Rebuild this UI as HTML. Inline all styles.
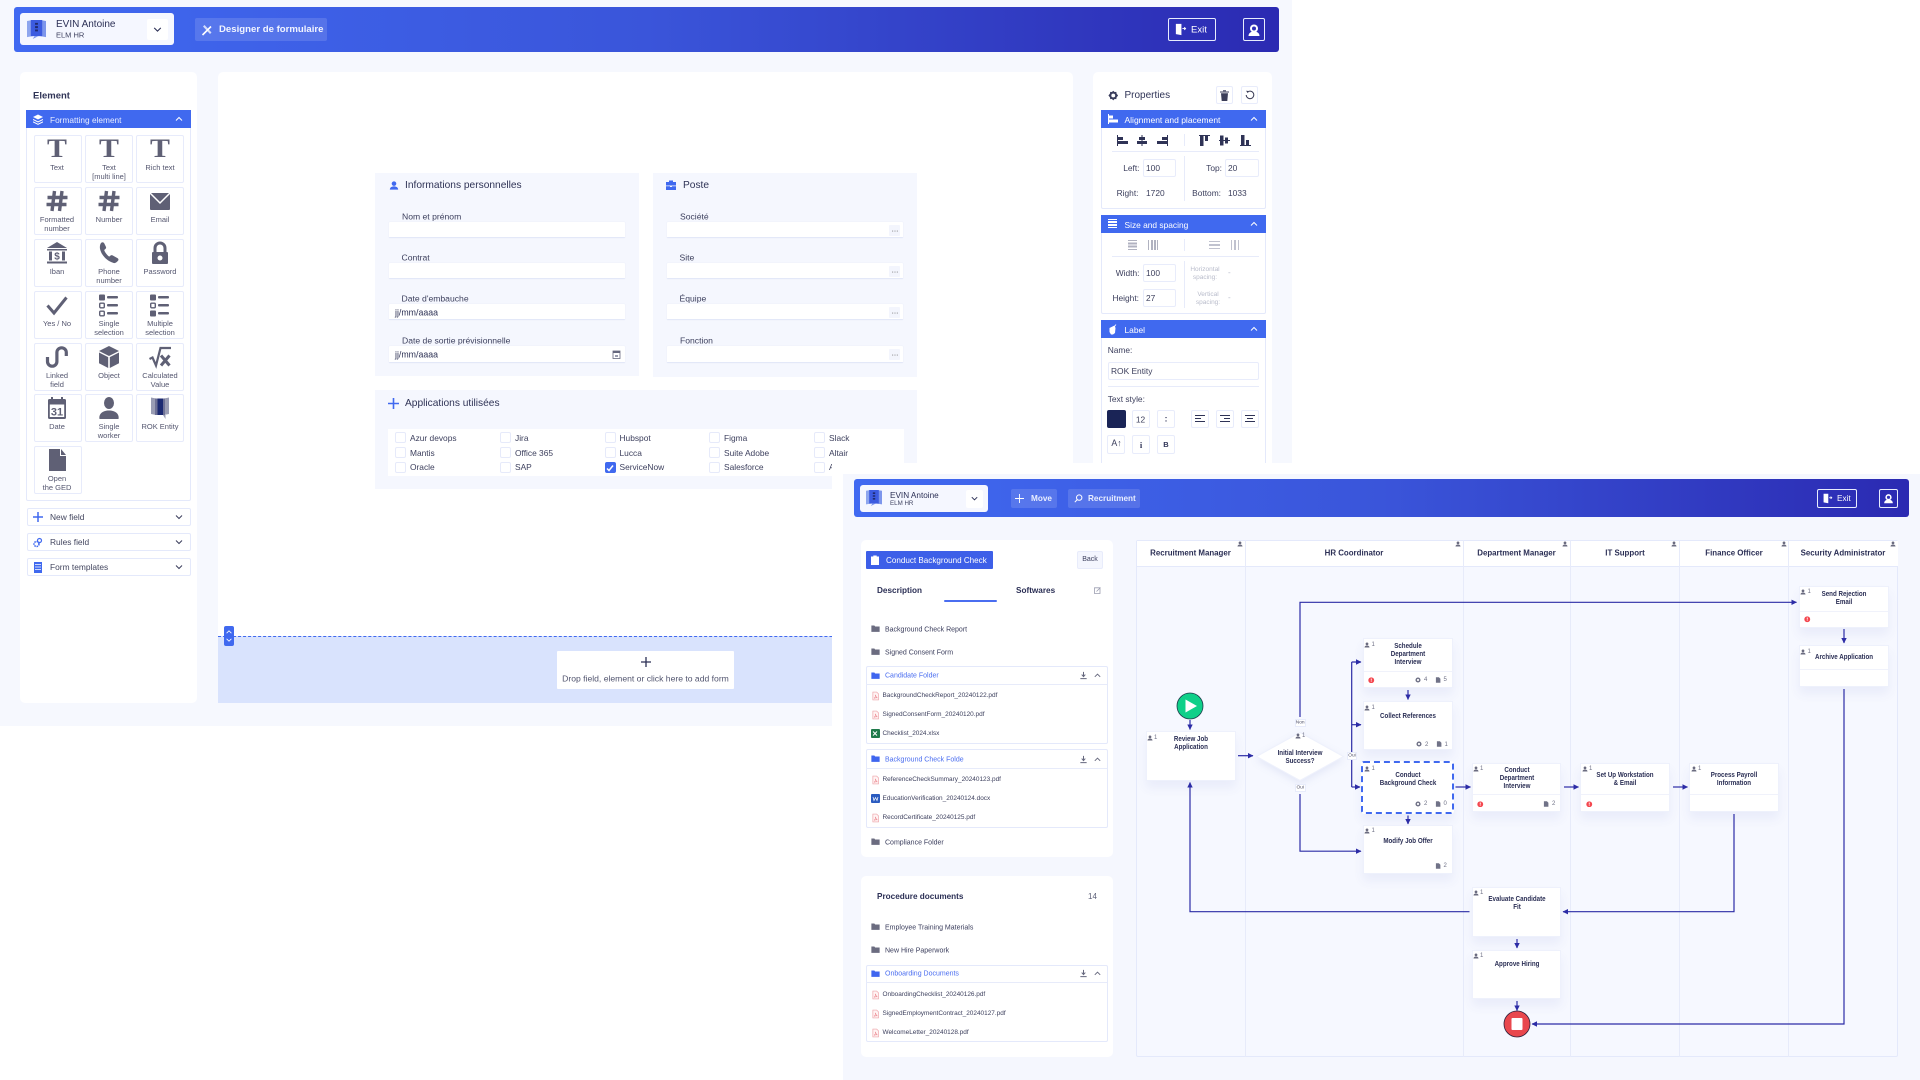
<!DOCTYPE html>
<html lang="en"><head><meta charset="utf-8"><title>Form designer and process map</title>
<style>
*{box-sizing:border-box}
html,body{margin:0;padding:0;width:1920px;height:1080px;overflow:hidden;background:#fff}
body{position:relative;font-family:"Liberation Sans",sans-serif;color:#2b2f55}
div,span,svg{position:absolute}
.t{white-space:nowrap;line-height:1;transform:translateY(-50%)}
.c{white-space:nowrap;line-height:1.1;text-align:center;transform:translate(-50%,-50%)}
.r{white-space:nowrap;line-height:1;text-align:right;transform:translate(-100%,-50%)}
.hd{background:linear-gradient(90deg,#4069f1 0%,#3a55da 50%,#2b2ab2 100%);border-radius:3px}
.user{background:#f5f7ff;border-radius:3px}
.chev{background:#fff;border-radius:2px}
.pill{background:rgba(255,255,255,.13);border-radius:2px}
.wb{border:1px solid #e8edfd;border-radius:2px;color:#fff}
.panel{background:#fff;border-radius:5px}
.ah{background:#4069ef;color:#fff}
.box{border:1px solid #e4e9fb;border-radius:2px;background:#fff}
.cell{background:#fff;border:1px solid #e7ebfb;border-radius:2px;width:48px;height:48px}
.lb{font-size:7.5px;color:#54566f;margin-top:.5px}
.sec{background:#f5f7fe}
.inp{background:#fff;border-bottom:1px solid #e3e8f8;border-radius:1px;box-shadow:0 0 0 .5px #eef1fb}
.ck{width:11px;height:11px;background:#fff;border:1px solid #e6eafa;border-radius:2px}
.n{background:#fff;border:1px solid #eef1fc;box-shadow:0 7px 10px rgba(70,90,180,.07);width:90px}
.nt{font-size:7.4px;font-weight:bold;color:#2b2f55;text-align:center;line-height:8px;white-space:nowrap;transform:translateX(-50%) scaleX(.84)}
.g{fill:#5f6075}
.b{fill:#4069ef}
.sq{background:#fff;border:1px solid #e8ecfb;border-radius:2px}
.dim{color:#b9bccb}
.f{font-size:6.45px;color:#3c3f5d}
.fold{font-size:7px;color:#3a3d5c}
.fb{font-size:7px;color:#4a6df0}
.hr{background:#e7ebfa}
.st{font-size:7px;color:#6f7186}
.T{font:bold 26px "Liberation Serif",serif;color:#5f6075;transform:translate(-50%,-50%) scaleX(1.15)}
.fl{font-size:8.6px;color:#3c3f5d}
.dots{background:#f3f5fd;width:11px;height:11px;border-radius:1px}
</style></head>
<body>
<svg width="0" height="0" style="left:0;top:0">
<defs>
<symbol id="person" viewBox="0 0 24 24"><circle cx="12" cy="7.5" r="5.5"/><path d="M2 22c0-5.5 4.500-8 10-8s10 2.500 10 8z"/></symbol>
<symbol id="folder" viewBox="0 0 24 24"><path d="M1 4h8l2 2.500h12V21H1z"/></symbol>
<symbol id="pdf" viewBox="0 0 24 24"><path d="M5 1.500h10l5 5v16H5z" fill="#fff3f3" stroke="#eea2a8" stroke-width="1.800"/><path d="M8 18c3-2 5-6 4-9 1 4 3 7 5 8-3-.500-6 0-9 1z" fill="none" stroke="#e56a74" stroke-width="1.300"/></symbol>
<symbol id="up" viewBox="0 0 10 10"><path d="M2 6.500 5 3.500 8 6.500" fill="none" stroke="currentColor" stroke-width="1"/></symbol>
<symbol id="down" viewBox="0 0 10 10"><path d="M2 3.500 5 6.500 8 3.500" fill="none" stroke="currentColor" stroke-width="1"/></symbol>
<symbol id="dl" viewBox="0 0 10 10"><path d="M5 1v5M3 4l2 2.200L7 4M1.500 8.500h7" fill="none" stroke="#66687e" stroke-width="1.100"/></symbol>
<symbol id="logo" viewBox="0 0 20 22"><path d="M0 2 6 1v17l-6 1z" fill="#8ea6ee"/><path d="M14 1l6 1v17l-6-1z" fill="#7d96ec"/><path d="M4 1h12v17H4z" fill="#3c5be0"/><path d="M6 21l2-3h4z" fill="#7d96ec"/><path d="M10 4v10" stroke="#1f2a6e" stroke-width="3" stroke-dasharray="2 1.500"/></symbol>
<symbol id="door" viewBox="0 0 14 14"><path d="M2 1h6v12l-6-1z" fill="#fff"/><path d="M9 6h3M11 4.500 12.500 6 11 7.500" stroke="#fff" stroke-width="1" fill="none"/></symbol>
<symbol id="avatar" viewBox="0 0 14 14"><circle cx="7" cy="5.500" r="4" fill="#fff"/><circle cx="7" cy="5.500" r="2" fill="#3030b8"/><path d="M1.500 13c0-3 2.500-4.500 5.500-4.500S12.500 10 12.500 13z" fill="#fff"/></symbol>
<symbol id="alert" viewBox="0 0 10 10"><circle cx="5" cy="5" r="4.500" fill="#f4474f"/><path d="M5 2.300v3.200M5 6.700v1" stroke="#fff" stroke-width="1.300"/></symbol>
<symbol id="soft" viewBox="0 0 10 10"><circle cx="5" cy="5" r="4.200" fill="#707287"/><circle cx="5" cy="5" r="1.800" fill="#fff"/></symbol>
<symbol id="doc" viewBox="0 0 10 10"><path d="M1.500 .5h5l2.500 2.500v6.500h-7.500z" fill="#707287"/></symbol>
<marker id="ah" markerWidth="6" markerHeight="6" refX="5" refY="3" orient="auto" markerUnits="userSpaceOnUse"><path d="M0 .3 5.500 3 0 5.700z" fill="#2c2ca6"/></marker>
</defs>
</svg>

<!-- WINDOW 1 -->
<div style="left:0;top:0;width:1292px;height:726px;background:#f6f8fe"></div>
<div class="hd" style="left:13.500px;top:7px;width:1265.500px;height:45px"></div>
<div class="user" style="left:20px;top:13px;width:154px;height:32px"></div>
<svg style="left:27px;top:19px" width="19" height="21"><use href="#logo"/></svg>
<span class="t" style="left:56px;top:25px;font-size:10px;color:#2b2f55">EVIN Antoine</span>
<span class="t" style="left:56px;top:35px;font-size:7.500px;color:#3f4260">ELM HR</span>
<div class="chev" style="left:147px;top:19px;width:21px;height:21px"></div>
<svg style="left:152px;top:24px;color:#2b2f55" width="11" height="11"><use href="#down"/></svg>
<div class="pill" style="left:195px;top:18px;width:132px;height:23px"></div>
<svg style="left:201px;top:23.500px" width="12" height="12" viewBox="0 0 12 12"><path d="M1.500 11 10 2.500" stroke="#fff" stroke-width="1.600"/><path d="M2 2.500 3.500 1l7 7.500L9 10z" fill="#fff" opacity=".75"/></svg>
<span class="t" style="left:219px;top:29.500px;font-size:9.600px;font-weight:bold;color:#f2f5ff">Designer de formulaire</span>
<div class="wb" style="left:1168px;top:18px;width:48px;height:23px"></div>
<svg style="left:1174px;top:23px" width="13" height="13"><use href="#door"/></svg>
<span class="t" style="left:1191px;top:29.500px;font-size:9.500px;color:#fff">Exit</span>
<div class="wb" style="left:1243px;top:18px;width:22px;height:23px"></div>
<svg style="left:1247px;top:22.500px" width="14" height="14"><use href="#avatar"/></svg>

<!-- left panel -->
<div class="panel" style="left:20px;top:72px;width:177px;height:631px"></div>
<span class="t" style="left:33px;top:95.500px;font-size:9.500px;font-weight:bold;color:#2f3356">Element</span>
<div class="box" style="left:26px;top:110px;width:165px;height:391px"></div>
<div class="ah" style="left:26px;top:110px;width:165px;height:18px"></div>
<svg style="left:33px;top:113.500px" width="10" height="11" viewBox="0 0 10 11"><path d="M5 .5 10 3 5 5.500 0 3z" fill="#fff"/><path d="M0 5.500 5 8l5-2.500M0 7.800l5 2.500 5-2.500" fill="none" stroke="#fff"/></svg>
<span class="t" style="left:50px;top:119.500px;font-size:8.300px;color:#e8edff">Formatting element</span>
<svg style="left:174px;top:114px;color:#fff" width="10" height="10"><use href="#up"/></svg>

<div class="cell" style="left:33.500px;top:135px"></div><div class="cell" style="left:85px;top:135px"></div><div class="cell" style="left:136px;top:135px"></div>
<div class="cell" style="left:33.500px;top:187px"></div><div class="cell" style="left:85px;top:187px"></div><div class="cell" style="left:136px;top:187px"></div>
<div class="cell" style="left:33.500px;top:239px"></div><div class="cell" style="left:85px;top:239px"></div><div class="cell" style="left:136px;top:239px"></div>
<div class="cell" style="left:33.500px;top:291px"></div><div class="cell" style="left:85px;top:291px"></div><div class="cell" style="left:136px;top:291px"></div>
<div class="cell" style="left:33.500px;top:343px"></div><div class="cell" style="left:85px;top:343px"></div><div class="cell" style="left:136px;top:343px"></div>
<div class="cell" style="left:33.500px;top:394px"></div><div class="cell" style="left:85px;top:394px"></div><div class="cell" style="left:136px;top:394px"></div>
<div class="cell" style="left:33.500px;top:446px"></div>

<span class="T" style="left:57px;top:149px">T</span>
<span class="T" style="left:109px;top:149px">T</span>
<span class="T" style="left:160px;top:149px">T</span>
<span class="c lb" style="left:57px;top:167px">Text</span>
<span class="c lb" style="left:109px;top:171.500px;line-height:9px">Text<br>[multi line]</span>
<span class="c lb" style="left:160px;top:167px">Rich text</span>

<svg style="left:45px;top:189px" width="24" height="24" viewBox="0 0 24 24"><path d="M9.500 2 7 22M17 2l-2.500 20M2.500 8.500h20M1.500 15.500h20" stroke="#5f6075" stroke-width="3.400" fill="none"/></svg>
<svg style="left:97px;top:189px" width="24" height="24" viewBox="0 0 24 24"><path d="M9.500 2 7 22M17 2l-2.500 20M2.500 8.500h20M1.500 15.500h20" stroke="#5f6075" stroke-width="3.400" fill="none"/></svg>
<svg style="left:148px;top:189px" width="24" height="24" viewBox="0 0 24 24"><rect x="2" y="4" width="20" height="17" rx="1" class="g"/><path d="M2 4l10 10L22 4" fill="none" stroke="#fff" stroke-width="1.500"/></svg>
<span class="c lb" style="left:57px;top:223.500px;line-height:9px">Formatted<br>number</span>
<span class="c lb" style="left:109px;top:219px">Number</span>
<span class="c lb" style="left:160px;top:219px">Email</span>

<svg style="left:45px;top:241px" width="24" height="24" viewBox="0 0 24 24"><path d="M12 1 22 7H2z" class="g"/><rect x="2" y="8" width="20" height="1.500" class="g"/><rect x="4" y="10.500" width="3" height="9" class="g"/><rect x="17" y="10.500" width="3" height="9" class="g"/><rect x="2" y="20.500" width="20" height="2" class="g"/><text x="12" y="18.500" font-size="10" font-weight="bold" text-anchor="middle" fill="#5f6075" font-family="Liberation Sans">$</text></svg>
<svg style="left:97px;top:241px" width="24" height="24" viewBox="0 0 24 24"><path d="M4.600 1.500c1-.6 2-.3 2.600.7l1.700 3.500c.4.800.3 1.600-.4 2.200L7.200 9c.6 2.200 3 5.400 5 6.600l1.400-1.100c.7-.5 1.500-.5 2.200 0l4.900 2.700c.9.700 1 1.800.3 2.600-1.400 1.700-3 2.800-5 2C10 19.800 4.600 14.500 3.100 8.200 2.500 5.800 3 2.600 4.600 1.500z" class="g"/></svg>
<svg style="left:148px;top:241px" width="24" height="24" viewBox="0 0 24 24"><path d="M7 12V7a5 5 0 0 1 10 0v5" fill="none" stroke="#5f6075" stroke-width="3"/><rect x="4" y="11" width="16" height="12" rx="1" class="g"/><circle cx="12" cy="17" r="2.500" fill="#fff"/></svg>
<span class="c lb" style="left:57px;top:271px">Iban</span>
<span class="c lb" style="left:109px;top:275.500px;line-height:9px">Phone<br>number</span>
<span class="c lb" style="left:160px;top:271px">Password</span>

<svg style="left:45px;top:293px" width="24" height="24" viewBox="0 0 24 24"><path d="M2.500 12.500 9 20 21.500 4.500" fill="none" stroke="#5f6075" stroke-width="3"/></svg>
<svg style="left:97px;top:293px" width="24" height="24" viewBox="0 0 24 24"><rect x="2" y="1.500" width="6" height="6" rx="1" class="g"/><rect x="10" y="3" width="11" height="2.500" rx="1" class="g"/><rect x="2.700" y="10.200" width="4.600" height="4.600" rx="1" fill="none" stroke="#5f6075" stroke-width="1.400"/><rect x="10" y="11" width="11" height="2.500" rx="1" class="g"/><rect x="2.700" y="18.200" width="4.600" height="4.600" rx="1" fill="none" stroke="#5f6075" stroke-width="1.400"/><rect x="10" y="19" width="11" height="2.500" rx="1" class="g"/></svg>
<svg style="left:148px;top:293px" width="24" height="24" viewBox="0 0 24 24"><rect x="2" y="1.500" width="6" height="6" rx="1" class="g"/><rect x="10" y="3" width="11" height="2.500" rx="1" class="g"/><rect x="2.700" y="10.200" width="4.600" height="4.600" rx="1" fill="none" stroke="#5f6075" stroke-width="1.400"/><rect x="10" y="11" width="11" height="2.500" rx="1" class="g"/><rect x="2" y="17.500" width="6" height="6" rx="1" class="g"/><rect x="10" y="19" width="11" height="2.500" rx="1" class="g"/></svg>
<span class="c lb" style="left:57px;top:323px">Yes / No</span>
<span class="c lb" style="left:109px;top:327.500px;line-height:9px">Single<br>selection</span>
<span class="c lb" style="left:160px;top:327.500px;line-height:9px">Multiple<br>selection</span>

<svg style="left:45px;top:345px" width="24" height="24" viewBox="0 0 24 24"><path d="M2.500 12v4.500a4.700 4.700 0 0 0 9.400 0V7.500a4.700 4.700 0 0 1 9.400 0V11" fill="none" stroke="#5f6075" stroke-width="3.200"/></svg>
<svg style="left:97px;top:345px" width="24" height="24" viewBox="0 0 24 24"><path d="M12 1 22 6 12 11 2 6z" class="g"/><path d="M2 7.500l9.200 4.600V23L2 18.300zM22 7.500l-9.200 4.600V23L22 18.300z" class="g"/></svg>
<svg style="left:148px;top:345px" width="24" height="24" viewBox="0 0 24 24"><path d="M1.500 14l3-1.500 3.500 8L12.500 3H23" fill="none" stroke="#5f6075" stroke-width="2.200"/><path d="M13 10.500l8.500 10M21.500 10.500l-8.500 10" stroke="#5f6075" stroke-width="3"/></svg>
<span class="c lb" style="left:57px;top:379.500px;line-height:9px">Linked<br>field</span>
<span class="c lb" style="left:109px;top:375px">Object</span>
<span class="c lb" style="left:160px;top:379.500px;line-height:9px">Calculated<br>Value</span>

<svg style="left:45px;top:396px" width="24" height="24" viewBox="0 0 24 24"><rect x="3" y="3" width="18" height="20" rx="1.500" class="g"/><rect x="4.800" y="8.500" width="14.400" height="12.500" fill="#fff"/><rect x="6" y="1" width="2" height="3" class="g"/><rect x="16" y="1" width="2" height="3" class="g"/><text x="12" y="19.500" font-size="11" font-weight="bold" text-anchor="middle" fill="#5f6075" font-family="Liberation Sans">31</text></svg>
<svg style="left:97px;top:396px" width="24" height="24" viewBox="0 0 24 24"><ellipse cx="12" cy="7" rx="5" ry="6" class="g"/><path d="M2.500 23c-1-5 3-8.500 9.500-8.500s10.500 3.500 9.500 8.500z" class="g"/></svg>
<svg style="left:148px;top:396px" width="24" height="24" viewBox="0 0 24 24"><path d="M3 1.500 8 2.500V19L3 18z" fill="#9a9db4"/><path d="M16 2.500l5-1V18l-5 1z" fill="#9a9db4"/><path d="M7 2.500h10V19H7z" fill="#6e7196"/><path d="M9.500 2.500H15V19H9.500z" fill="#1c2a72"/><path d="M15 19l2.500 4V19z" fill="#9a9db4"/></svg>
<span class="c lb" style="left:57px;top:426px">Date</span>
<span class="c lb" style="left:109px;top:430.500px;line-height:9px">Single<br>worker</span>
<span class="c lb" style="left:160px;top:426px">ROK Entity</span>

<svg style="left:45px;top:448px" width="24" height="24" viewBox="0 0 24 24"><path d="M4 1h11v7h6v15H4zM16 1l5 6h-5z" class="g"/></svg>
<span class="c lb" style="left:57px;top:482.500px;line-height:9px">Open<br>the GED</span>

<div class="box" style="left:26.500px;top:508px;width:164px;height:17.500px"></div>
<svg style="left:33px;top:512px" width="10" height="10" viewBox="0 0 10 10"><path d="M5 0v10M0 5h10" stroke="#4069ef" stroke-width="1.500"/></svg>
<span class="t" style="left:50px;top:517px;font-size:8.400px;color:#43465f">New field</span>
<svg style="left:174px;top:512px;color:#3a3d5c" width="10" height="10"><use href="#down"/></svg>
<div class="box" style="left:26.500px;top:533px;width:164px;height:17.500px"></div>
<svg style="left:33px;top:536.500px" width="10" height="11" viewBox="0 0 10 11"><circle cx="6.500" cy="3.500" r="2" fill="none" stroke="#4069ef" stroke-width="1.200"/><circle cx="3.500" cy="7" r="2.500" fill="none" stroke="#4069ef" stroke-width="1.500" stroke-dasharray="1.500 .8"/></svg>
<span class="t" style="left:50px;top:542px;font-size:8.400px;color:#43465f">Rules field</span>
<svg style="left:174px;top:537px;color:#3a3d5c" width="10" height="10"><use href="#down"/></svg>
<div class="box" style="left:26.500px;top:558px;width:164px;height:17.500px"></div>
<svg style="left:34px;top:561.500px" width="8" height="11" viewBox="0 0 8 11"><path d="M0 0h8v11H0z" fill="#4069ef"/><path d="M1 2.500h6M1 5h6M1 7.500h6" stroke="#fff" stroke-width=".7"/></svg>
<span class="t" style="left:50px;top:567px;font-size:8.400px;color:#43465f">Form templates</span>
<svg style="left:174px;top:562px;color:#3a3d5c" width="10" height="10"><use href="#down"/></svg>

<!-- canvas -->
<div class="panel" style="left:218px;top:72px;width:855px;height:631px"></div>
<div class="sec" style="left:375px;top:173px;width:264px;height:203px"></div>
<div class="sec" style="left:653px;top:173px;width:264px;height:204px"></div>
<div class="sec" style="left:375px;top:390px;width:542px;height:99px"></div>
<svg style="left:389px;top:179.500px" width="10" height="11"><use href="#person" class="b"/></svg>
<span class="t" style="left:405px;top:186.200px;font-size:10.200px;color:#2f3356">Informations personnelles</span>
<svg style="left:666px;top:180px" width="10" height="10" viewBox="0 0 10 10"><path d="M3 2V.5h4V2h3v3.500H0V2zM0 6.200h4V7h2v-.8h4V10H0z" fill="#4069ef"/></svg>
<span class="t" style="left:683px;top:186.200px;font-size:10.200px;color:#2f3356">Poste</span>

<span class="t fl" style="left:402px;top:217px">Nom et prénom</span>
<div class="inp" style="left:388.500px;top:222px;width:236.500px;height:16px"></div>
<span class="t fl" style="left:401.500px;top:258px">Contrat</span>
<div class="inp" style="left:388.500px;top:263px;width:236.500px;height:16px"></div>
<span class="t fl" style="left:401.500px;top:299px">Date d'embauche</span>
<div class="inp" style="left:388.500px;top:304px;width:236.500px;height:16px"></div>
<span class="t" style="left:395px;top:313px;font-size:8.800px;color:#2f3356">jj/mm/aaaa</span>
<span class="t fl" style="left:402px;top:341px">Date de sortie prévisionnelle</span>
<div class="inp" style="left:388.500px;top:346px;width:236.500px;height:17px"></div>
<span class="t" style="left:395px;top:355px;font-size:8.800px;color:#2f3356">jj/mm/aaaa</span>
<svg style="left:612px;top:350px" width="9" height="9" viewBox="0 0 9 9"><rect x="1" y="1" width="7" height="7.500" fill="#fff" stroke="#66687e" stroke-width=".8"/><rect x="1" y="1" width="7" height="2" fill="#66687e"/><path d="M3 5h3v2H3z" fill="#9a9cae"/></svg>

<span class="t fl" style="left:680px;top:217px">Société</span>
<div class="inp" style="left:666.500px;top:222px;width:236.500px;height:16px"></div>
<span class="t fl" style="left:679.500px;top:258px">Site</span>
<div class="inp" style="left:666.500px;top:263px;width:236.500px;height:16px"></div>
<span class="t fl" style="left:679.500px;top:299px">Équipe</span>
<div class="inp" style="left:666.500px;top:304px;width:236.500px;height:16px"></div>
<span class="t fl" style="left:680px;top:341px">Fonction</span>
<div class="inp" style="left:666.500px;top:346px;width:236.500px;height:17px"></div>
<div class="dots" style="left:889px;top:225px"></div><div class="dots" style="left:889px;top:266px"></div><div class="dots" style="left:889px;top:307px"></div><div class="dots" style="left:889px;top:349px"></div>
<span class="c" style="left:895px;top:230px;font-size:8px;color:#555">...</span>
<span class="c" style="left:895px;top:271px;font-size:8px;color:#555">...</span>
<span class="c" style="left:895px;top:312px;font-size:8px;color:#555">...</span>
<span class="c" style="left:895px;top:354px;font-size:8px;color:#555">...</span>

<svg style="left:388px;top:397.500px" width="11" height="11" viewBox="0 0 11 11"><path d="M5.500 0v11M0 5.500h11" stroke="#4069ef" stroke-width="1.600"/></svg>
<span class="t" style="left:405px;top:403.700px;font-size:10.200px;color:#2f3356">Applications utilisées</span>
<div style="left:387.500px;top:429px;width:516.500px;height:47px;background:#fff"></div>
<div class="ck" style="left:395px;top:432px"></div><div class="ck" style="left:500px;top:432px"></div><div class="ck" style="left:604.500px;top:432px"></div><div class="ck" style="left:709px;top:432px"></div><div class="ck" style="left:814px;top:432px"></div>
<div class="ck" style="left:395px;top:447px"></div><div class="ck" style="left:500px;top:447px"></div><div class="ck" style="left:604.500px;top:447px"></div><div class="ck" style="left:709px;top:447px"></div><div class="ck" style="left:814px;top:447px"></div>
<div class="ck" style="left:395px;top:462px"></div><div class="ck" style="left:500px;top:462px"></div><div class="ck" style="left:709px;top:462px"></div><div class="ck" style="left:814px;top:462px"></div>
<div class="ck" style="left:604.500px;top:462px;background:#4069ef;border-color:#4069ef"></div>
<svg style="left:606px;top:463.500px" width="8" height="8" viewBox="0 0 8 8"><path d="M1 4.500 3 6.500 7 1.500" fill="none" stroke="#fff" stroke-width="1.500"/></svg>
<span class="t f" style="left:410px;top:438px;font-size:8.400px">Azur devops</span>
<span class="t f" style="left:515px;top:438px;font-size:8.400px">Jira</span>
<span class="t f" style="left:619.500px;top:438px;font-size:8.400px">Hubspot</span>
<span class="t f" style="left:724px;top:438px;font-size:8.400px">Figma</span>
<span class="t f" style="left:829px;top:438px;font-size:8.400px">Slack</span>
<span class="t f" style="left:410px;top:452.500px;font-size:8.400px">Mantis</span>
<span class="t f" style="left:515px;top:452.500px;font-size:8.400px">Office 365</span>
<span class="t f" style="left:619.500px;top:452.500px;font-size:8.400px">Lucca</span>
<span class="t f" style="left:724px;top:452.500px;font-size:8.400px">Suite Adobe</span>
<span class="t f" style="left:829px;top:452.500px;font-size:8.400px">Altair</span>
<span class="t f" style="left:410px;top:467px;font-size:8.400px">Oracle</span>
<span class="t f" style="left:515px;top:467px;font-size:8.400px">SAP</span>
<span class="t f" style="left:619.500px;top:467px;font-size:8.400px">ServiceNow</span>
<span class="t f" style="left:724px;top:467px;font-size:8.400px">Salesforce</span>
<span class="t f" style="left:829px;top:467px;font-size:8.400px">Autre</span>

<div style="left:218px;top:636px;width:855px;height:67px;background:#d9e3fd;border-top:1.500px dashed #4069ef"></div>
<div style="left:224px;top:625.500px;width:9.500px;height:20px;background:#4069ef;border-radius:2px"></div>
<svg style="left:224.500px;top:628px;color:#fff" width="8" height="8"><use href="#up"/></svg>
<svg style="left:224.500px;top:636px;color:#fff" width="8" height="8"><use href="#down"/></svg>
<div style="left:557px;top:651px;width:177px;height:38px;background:#fff;border-radius:1px"></div>
<svg style="left:641px;top:657px" width="10" height="10" viewBox="0 0 10 10"><path d="M5 0v10M0 5h10" stroke="#2b2f55" stroke-width="1.300"/></svg>
<span class="c" style="left:645.500px;top:678.500px;font-size:8.600px;color:#52556f">Drop field, element or click here to add form</span>

<!-- properties -->
<div class="panel" style="left:1093px;top:72px;width:179px;height:631px"></div>
<svg style="left:1107.500px;top:89.500px" width="10.500" height="11" viewBox="0 0 12 12"><path d="M6 .5 7.500 2l2-.2.300 2L11.500 6l-1.700 2.200-.3 2-2-.2L6 11.500 4.500 10l-2 .2-.3-2L.5 6l1.700-2.200.3-2 2 .2z" fill="#3a3d5c"/><circle cx="6" cy="6" r="2.200" fill="#fff"/></svg>
<span class="t" style="left:1124.500px;top:95.700px;font-size:10px;color:#2f3356">Properties</span>
<div class="sq" style="left:1216px;top:86px;width:17px;height:18px"></div>
<svg style="left:1220px;top:89.500px" width="9" height="11" viewBox="0 0 9 11"><path d="M0 1.500h9v1H0zM3 .3h3v1H3zM1 3.200h7L7.300 11H1.700z" fill="#3c3e58"/></svg>
<div class="sq" style="left:1241px;top:86px;width:17px;height:18px"></div>
<svg style="left:1244.500px;top:90px" width="10" height="10" viewBox="0 0 10 10"><path d="M2.200 2.300A3.800 3.800 0 1 1 1.200 5" fill="none" stroke="#3c3e58" stroke-width="1"/><path d="M1 .8 3.500 1 3 3.300z" fill="#3c3e58"/></svg>

<div class="box" style="left:1101px;top:110px;width:164.500px;height:98.500px"></div>
<div class="ah" style="left:1101px;top:110px;width:164.500px;height:18px"></div>
<svg style="left:1107.500px;top:114px" width="10" height="10" viewBox="0 0 10 10"><path d="M0 0h1v10H0zM1 1.500h4v3H1zM1 5.500h9v3H1z" fill="#fff"/></svg>
<span class="t" style="left:1124.500px;top:119.500px;font-size:8.500px;color:#fff">Alignment and placement</span>
<svg style="left:1249px;top:114px;color:#fff" width="10" height="10"><use href="#up"/></svg>
<svg style="left:1116.500px;top:134.500px" width="12" height="11" viewBox="0 0 12 11"><path d="M0 0h1v11H0zM1 2h5v3H1zM1 6h10v3H1z" fill="#2f3356"/></svg>
<svg style="left:1136px;top:134.500px" width="12" height="11" viewBox="0 0 12 11"><path d="M5.500 0h1v11h-1zM3 2h6v3H3zM1 6h10v3H1z" fill="#2f3356"/></svg>
<svg style="left:1156px;top:134.500px" width="12" height="11" viewBox="0 0 12 11"><path d="M11 0h1v11h-1zM6 2h5v3H6zM1 6h10v3H1z" fill="#2f3356"/></svg>
<svg style="left:1199px;top:134.500px" width="11" height="11" viewBox="0 0 11 11"><path d="M0 0h11v1H0zM1 1h3.500v10H1zM6 1h3v5H6z" fill="#2f3356"/></svg>
<svg style="left:1219px;top:134.500px" width="11" height="11" viewBox="0 0 11 11"><path d="M0 5h11v1H0zM1 .5h3.500v10H1zM6 2.500h3v6H6z" fill="#2f3356"/></svg>
<svg style="left:1239.500px;top:134.500px" width="11" height="11" viewBox="0 0 11 11"><path d="M0 10h11v1H0zM1 0h3.500v10H1zM6 5h3v5H6z" fill="#2f3356"/></svg>
<div class="hr" style="left:1112px;top:151px;width:147px;height:1px"></div>
<div class="hr" style="left:1184px;top:134px;width:1px;height:12px"></div>
<div class="hr" style="left:1184px;top:156px;width:1px;height:45px"></div>
<span class="r f" style="left:1139.500px;top:168px;font-size:8.400px">Left:</span>
<div class="sq" style="left:1143px;top:159px;width:33px;height:17.500px"></div>
<span class="t f" style="left:1146px;top:168px;font-size:8.400px">100</span>
<span class="r f" style="left:1222px;top:168px;font-size:8.400px">Top:</span>
<div class="sq" style="left:1225px;top:159px;width:34px;height:17.500px"></div>
<span class="t f" style="left:1228px;top:168px;font-size:8.400px">20</span>
<span class="r f" style="left:1138.500px;top:192.500px;font-size:8.400px">Right:</span>
<span class="t f" style="left:1146px;top:192.500px;font-size:8.400px">1720</span>
<span class="r f" style="left:1221px;top:192.500px;font-size:8.400px">Bottom:</span>
<span class="t f" style="left:1228px;top:192.500px;font-size:8.400px">1033</span>

<div class="box" style="left:1101px;top:215px;width:164.500px;height:98.500px"></div>
<div class="ah" style="left:1101px;top:215px;width:164.500px;height:18px"></div>
<svg style="left:1108px;top:219px" width="9" height="10" viewBox="0 0 9 10"><path d="M0 0h9v1H0zM0 2h9v2H0zM0 5h9v2H0zM0 8h9v1H0z" fill="#fff"/></svg>
<span class="t" style="left:1124.500px;top:224.500px;font-size:8.400px;color:#fff">Size and spacing</span>
<svg style="left:1249px;top:219px;color:#fff" width="10" height="10"><use href="#up"/></svg>
<svg style="left:1128px;top:240px" width="9" height="10" viewBox="0 0 9 10"><path d="M0 0h9v1H0zM0 2.500h9v2H0zM0 5.500h9v2H0zM0 9h9v1H0z" fill="#b0b2c0"/></svg>
<svg style="left:1147.500px;top:240px" width="10" height="10" viewBox="0 0 10 10"><path d="M0 0h1v10H0zM3 0h2v10H3zM6 0h2v10H6zM9 0h1v10H9z" fill="#b0b2c0"/></svg>
<svg style="left:1209px;top:241px" width="11" height="8" viewBox="0 0 11 8"><path d="M0 0h11v1H0zM0 3h11v2H0zM0 7h11v1H0z" fill="#c0c2cf"/></svg>
<svg style="left:1231px;top:240px" width="8" height="10" viewBox="0 0 8 10"><path d="M0 0h1v10H0zM3 0h2v10H3zM7 0h1v10H7z" fill="#c0c2cf"/></svg>
<div class="hr" style="left:1112px;top:256px;width:147px;height:1px"></div>
<div class="hr" style="left:1184px;top:239px;width:1px;height:12px"></div>
<div class="hr" style="left:1184px;top:261px;width:1px;height:47px"></div>
<span class="r f" style="left:1139.500px;top:273px;font-size:8.400px">Width:</span>
<div class="sq" style="left:1143px;top:264px;width:33px;height:17.500px"></div>
<span class="t f" style="left:1146px;top:273px;font-size:8.400px">100</span>
<span class="r f" style="left:1139px;top:298px;font-size:8.400px">Height:</span>
<div class="sq" style="left:1143px;top:289px;width:33px;height:17.500px"></div>
<span class="t f" style="left:1146px;top:298px;font-size:8.400px">27</span>
<span class="c dim" style="left:1205px;top:273.500px;font-size:6.500px;line-height:8px">Horizontal<br>spacing:</span>
<span class="c dim" style="left:1208px;top:298.500px;font-size:6.500px;line-height:8px">Vertical<br>spacing:</span>
<span class="t dim" style="left:1228px;top:273px;font-size:8px">-</span>
<span class="t dim" style="left:1228px;top:298px;font-size:8px">-</span>

<div class="box" style="left:1101px;top:320px;width:164.500px;height:150px"></div>
<div class="ah" style="left:1101px;top:320px;width:164.500px;height:18px"></div>
<svg style="left:1108px;top:324px" width="9" height="11" viewBox="0 0 9 11"><path d="M1.500 4 6.500 1.500 7.500 4 7 9 5 10.500H3L1.500 8z" fill="#fff"/><path d="M5 4.500 8 .5" stroke="#fff" stroke-width=".8"/></svg>
<span class="t" style="left:1124.500px;top:329.500px;font-size:8.400px;color:#fff">Label</span>
<svg style="left:1249px;top:324px;color:#fff" width="10" height="10"><use href="#up"/></svg>
<span class="t f" style="left:1107.700px;top:350px;font-size:8.400px">Name:</span>
<div class="sq" style="left:1108px;top:362px;width:151px;height:18px"></div>
<span class="t f" style="left:1111px;top:371px;font-size:8.400px">ROK Entity</span>
<div class="hr" style="left:1108px;top:386px;width:151px;height:1px"></div>
<span class="t f" style="left:1107.700px;top:399px;font-size:8.400px">Text style:</span>
<div style="left:1107px;top:410px;width:19px;height:18px;background:#1a2456;border-radius:2px"></div>
<div class="sq" style="left:1132px;top:410px;width:18px;height:18px"></div>
<span class="c f" style="left:1140.500px;top:419.500px;font-size:8.400px">12</span>
<div class="sq" style="left:1157px;top:410px;width:18px;height:18px"></div>
<span class="c" style="left:1166px;top:419px;font-size:8.400px;font-weight:bold;color:#2f3356">:</span>
<div class="sq" style="left:1191px;top:410px;width:18px;height:18px"></div>
<svg style="left:1195px;top:415px" width="10" height="8" viewBox="0 0 10 8"><path d="M0 0h10v1H0zM0 3h6v1H0zM0 6h10v1H0z" fill="#2f3356"/></svg>
<div class="sq" style="left:1216px;top:410px;width:18px;height:18px"></div>
<svg style="left:1220px;top:415px" width="10" height="8" viewBox="0 0 10 8"><path d="M0 0h10v1H0zM4 3h6v1H4zM0 6h10v1H0z" fill="#2f3356"/></svg>
<div class="sq" style="left:1241px;top:410px;width:18px;height:18px"></div>
<svg style="left:1245px;top:415px" width="10" height="8" viewBox="0 0 10 8"><path d="M0 0h10v1H0zM2 3h6v1H2zM0 6h10v1H0z" fill="#2f3356"/></svg>
<div class="sq" style="left:1107px;top:435px;width:18px;height:18.500px"></div>
<span class="c f" style="left:1116.500px;top:444px;font-size:8.800px">A↑</span>
<div class="sq" style="left:1132px;top:435px;width:18px;height:18.500px"></div>
<span class="c" style="left:1141px;top:444.500px;font:bold 8.500px 'Liberation Serif',serif;color:#2f3356">i</span>
<div class="sq" style="left:1157px;top:435px;width:18px;height:18.500px"></div>
<span class="c" style="left:1166px;top:444.500px;font-size:7.500px;font-weight:bold;color:#2f3356">B</span>

<!-- WINDOW 2 -->
<div style="left:832px;top:463px;width:1088px;height:617px;background:#fff"></div>
<div style="left:843px;top:474px;width:1077px;height:606px;background:#f5f7fe"></div>
<div class="hd" style="left:854px;top:479.300px;width:1055px;height:37.700px"></div>
<div class="user" style="left:860px;top:485px;width:128px;height:26.500px"></div>
<svg style="left:866px;top:489px" width="16" height="18"><use href="#logo"/></svg>
<span class="t" style="left:890px;top:495.700px;font-size:8.200px;color:#2b2f55">EVIN Antoine</span>
<span class="t" style="left:890px;top:503.500px;font-size:6.200px;color:#3f4260">ELM HR</span>
<div class="chev" style="left:966px;top:490px;width:17px;height:17.500px"></div>
<svg style="left:970px;top:494px;color:#2b2f55" width="9" height="9"><use href="#down"/></svg>
<div class="pill" style="left:1011px;top:489px;width:46px;height:19px"></div>
<svg style="left:1015px;top:494px" width="9" height="9" viewBox="0 0 9 9"><path d="M4.500 0v9M0 4.500h9" stroke="#fff" stroke-width=".9"/></svg>
<span class="t" style="left:1031px;top:499px;font-size:8.200px;font-weight:bold;color:#e9eeff">Move</span>
<div class="pill" style="left:1068px;top:489px;width:72px;height:19px"></div>
<svg style="left:1074px;top:494px" width="9" height="9" viewBox="0 0 9 9"><circle cx="5.200" cy="3.600" r="2.700" fill="none" stroke="#fff"/><path d="M3.200 5.600 .8 8.200" stroke="#fff"/></svg>
<span class="t" style="left:1088px;top:499px;font-size:8.200px;font-weight:bold;color:#e9eeff">Recruitment</span>
<div class="wb" style="left:1817px;top:489px;width:40px;height:19px"></div>
<svg style="left:1822px;top:493px" width="11" height="11"><use href="#door"/></svg>
<span class="t" style="left:1837px;top:499px;font-size:8.200px;color:#fff">Exit</span>
<div class="wb" style="left:1879px;top:489px;width:19px;height:19px"></div>
<svg style="left:1883px;top:493px" width="11" height="11"><use href="#avatar"/></svg>

<!-- doc panels -->
<div class="panel" style="left:860.500px;top:540px;width:252.500px;height:317px"></div>
<div style="left:865.500px;top:551px;width:127px;height:18px;background:#3d5fe8;border-radius:1px"></div>
<svg style="left:871px;top:555px" width="8" height="10" viewBox="0 0 8 10"><path d="M0 1.500h2.300V.5h3.400v1H8V10H0z" fill="#fff"/></svg>
<span class="t" style="left:886px;top:560.500px;font-size:8.100px;color:#fff">Conduct Background Check</span>
<div class="sq" style="left:1077px;top:551px;width:26px;height:18px;background:#f4f6fe"></div>
<span class="c" style="left:1090px;top:560px;font-size:7px;color:#3c3f5d">Back</span>
<span class="t" style="left:877px;top:590.500px;font-size:8.200px;font-weight:bold;color:#2b2f55">Description</span>
<span class="t" style="left:1016px;top:590.500px;font-size:8.200px;font-weight:bold;color:#2b2f55">Softwares</span>
<div style="left:943.500px;top:600.300px;width:53px;height:2px;background:#4a6df0;border-radius:1px"></div>
<svg style="left:1094px;top:587px" width="7" height="7" viewBox="0 0 7 7"><path d="M.5.800h5.500v5.700H.5zM2.500 4.500 6.500.5" fill="none" stroke="#9b9db0" stroke-width=".8"/></svg>

<svg style="left:871px;top:624px" width="9" height="9" fill="#6b6c80"><use href="#folder"/></svg>
<span class="t fold" style="left:885px;top:629.500px">Background Check Report</span>
<svg style="left:871px;top:647px" width="9" height="9" fill="#6b6c80"><use href="#folder"/></svg>
<span class="t fold" style="left:885px;top:652.500px">Signed Consent Form</span>

<div class="box" style="left:865.500px;top:666px;width:242px;height:78px"></div>
<div class="hr" style="left:866px;top:684px;width:241px;height:1px"></div>
<svg style="left:871px;top:670.500px" width="9" height="9" fill="#3f66ef"><use href="#folder"/></svg>
<span class="t fb" style="left:885px;top:676px">Candidate Folder</span>
<svg style="left:1079px;top:671px" width="9" height="9"><use href="#dl"/></svg>
<svg style="left:1093px;top:671px;color:#66687e" width="9" height="9"><use href="#up"/></svg>
<svg style="left:871px;top:691px" width="9" height="10"><use href="#pdf"/></svg>
<span class="t f" style="left:882.500px;top:696px">BackgroundCheckReport_20240122.pdf</span>
<svg style="left:871px;top:710px" width="9" height="10"><use href="#pdf"/></svg>
<span class="t f" style="left:882.500px;top:715px">SignedConsentForm_20240120.pdf</span>
<svg style="left:871px;top:729px" width="9" height="9" viewBox="0 0 9 9"><rect width="9" height="9" rx="1" fill="#1f7a4a"/><path d="M2 2.500l4 4M6 2.500l-4 4" stroke="#fff"/></svg>
<span class="t f" style="left:882.500px;top:734px">Checklist_2024.xlsx</span>

<div class="box" style="left:865.500px;top:749px;width:242px;height:79px"></div>
<div class="hr" style="left:866px;top:768px;width:241px;height:1px"></div>
<svg style="left:871px;top:754px" width="9" height="9" fill="#3f66ef"><use href="#folder"/></svg>
<span class="t fb" style="left:885px;top:759.500px">Background Check Folde</span>
<svg style="left:1079px;top:754.500px" width="9" height="9"><use href="#dl"/></svg>
<svg style="left:1093px;top:754.500px;color:#66687e" width="9" height="9"><use href="#up"/></svg>
<svg style="left:871px;top:774.500px" width="9" height="10"><use href="#pdf"/></svg>
<span class="t f" style="left:882.500px;top:779.500px">ReferenceCheckSummary_20240123.pdf</span>
<svg style="left:871px;top:793.500px" width="9" height="9" viewBox="0 0 9 9"><rect width="9" height="9" rx="1" fill="#2a5bc0"/><path d="M2 3l1 3.500L4.500 3.500 6 6.500 7 3" fill="none" stroke="#fff" stroke-width=".7"/></svg>
<span class="t f" style="left:882.500px;top:798.500px">EducationVerification_20240124.docx</span>
<svg style="left:871px;top:812.500px" width="9" height="10"><use href="#pdf"/></svg>
<span class="t f" style="left:882.500px;top:817.500px">RecordCertificate_20240125.pdf</span>
<svg style="left:871px;top:837px" width="9" height="9" fill="#6b6c80"><use href="#folder"/></svg>
<span class="t fold" style="left:885px;top:842.500px">Compliance Folder</span>

<div class="panel" style="left:860.500px;top:876px;width:252.500px;height:181px"></div>
<span class="t" style="left:877px;top:897px;font-size:8.200px;font-weight:bold;color:#2b2f55">Procedure documents</span>
<span class="t" style="left:1088px;top:897px;font-size:8px;color:#5c5f78">14</span>
<svg style="left:871px;top:922px" width="9" height="9" fill="#6b6c80"><use href="#folder"/></svg>
<span class="t fold" style="left:885px;top:927.500px">Employee Training Materials</span>
<svg style="left:871px;top:945px" width="9" height="9" fill="#6b6c80"><use href="#folder"/></svg>
<span class="t fold" style="left:885px;top:950.500px">New Hire Paperwork</span>
<div class="box" style="left:865.500px;top:965px;width:242px;height:76.500px"></div>
<div class="hr" style="left:866px;top:982px;width:241px;height:1px"></div>
<svg style="left:871px;top:968.500px" width="9" height="9" fill="#3f66ef"><use href="#folder"/></svg>
<span class="t fb" style="left:885px;top:974px">Onboarding Documents</span>
<svg style="left:1079px;top:969px" width="9" height="9"><use href="#dl"/></svg>
<svg style="left:1093px;top:969px;color:#66687e" width="9" height="9"><use href="#up"/></svg>
<svg style="left:871px;top:989.500px" width="9" height="10"><use href="#pdf"/></svg>
<span class="t f" style="left:882.500px;top:994.500px">OnboardingChecklist_20240126.pdf</span>
<svg style="left:871px;top:1008.500px" width="9" height="10"><use href="#pdf"/></svg>
<span class="t f" style="left:882.500px;top:1013.500px">SignedEmploymentContract_20240127.pdf</span>
<svg style="left:871px;top:1027.500px" width="9" height="10"><use href="#pdf"/></svg>
<span class="t f" style="left:882.500px;top:1032.500px">WelcomeLetter_20240128.pdf</span>

<!-- board -->
<div style="left:1136px;top:540px;width:762px;height:517px;background:#f6f8ff;border:1px solid #e4e9fb;border-radius:2px"></div>
<div style="left:1136.500px;top:540.500px;width:761px;height:26px;background:#fff;border-bottom:1px solid #e4e9fb"></div>
<div class="hr" style="left:1245px;top:540px;width:1px;height:517px"></div>
<div class="hr" style="left:1463px;top:540px;width:1px;height:517px"></div>
<div class="hr" style="left:1569.500px;top:540px;width:1px;height:517px"></div>
<div class="hr" style="left:1679px;top:540px;width:1px;height:517px"></div>
<div class="hr" style="left:1788px;top:540px;width:1px;height:517px"></div>
<span class="c" style="left:1190.500px;top:553.500px;font-size:7.900px;font-weight:bold;color:#2b2f55">Recruitment Manager</span>
<span class="c" style="left:1354px;top:553.500px;font-size:7.900px;font-weight:bold;color:#2b2f55">HR Coordinator</span>
<span class="c" style="left:1516.500px;top:553.500px;font-size:7.900px;font-weight:bold;color:#2b2f55">Department Manager</span>
<span class="c" style="left:1625px;top:553.500px;font-size:7.900px;font-weight:bold;color:#2b2f55">IT Support</span>
<span class="c" style="left:1734px;top:553.500px;font-size:7.900px;font-weight:bold;color:#2b2f55">Finance Officer</span>
<span class="c" style="left:1843px;top:553.500px;font-size:7.900px;font-weight:bold;color:#2b2f55">Security Administrator</span>
<svg style="left:1237px;top:541px" width="6" height="6" fill="#6b6c80"><use href="#person"/></svg>
<svg style="left:1455px;top:541px" width="6" height="6" fill="#6b6c80"><use href="#person"/></svg>
<svg style="left:1562px;top:541px" width="6" height="6" fill="#6b6c80"><use href="#person"/></svg>
<svg style="left:1671px;top:541px" width="6" height="6" fill="#6b6c80"><use href="#person"/></svg>
<svg style="left:1781px;top:541px" width="6" height="6" fill="#6b6c80"><use href="#person"/></svg>
<svg style="left:1890px;top:541px" width="6" height="6" fill="#6b6c80"><use href="#person"/></svg>

<!-- nodes -->
<div class="n" style="left:1146px;top:730.600px;height:50.400px"></div>
<div class="n" style="left:1363px;top:637.600px;height:50.400px"></div>
<div class="n" style="left:1363px;top:700.600px;height:49.400px"></div>
<div class="n" style="left:1360.600px;top:760.600px;width:93.500px;height:53.400px;border:2px dashed #4069ef;border-radius:3px"></div>
<div class="n" style="left:1363px;top:825px;height:49px"></div>
<div class="n" style="left:1472px;top:762.600px;width:89px;height:49.400px"></div>
<div class="n" style="left:1580px;top:762.600px;height:49.400px"></div>
<div class="n" style="left:1689px;top:762.600px;height:49.400px"></div>
<div class="n" style="left:1798.600px;top:585.600px;height:42px"></div>
<div class="n" style="left:1798.600px;top:645px;height:42px"></div>
<div class="n" style="left:1472px;top:886.700px;width:89px;height:50px"></div>
<div class="n" style="left:1472px;top:950px;width:89px;height:49px"></div>
<div class="hr" style="left:1364px;top:670.700px;width:88px;height:1px;background:#f0f2fb"></div>
<div class="hr" style="left:1473px;top:794px;width:87px;height:1px;background:#f0f2fb"></div>
<div class="hr" style="left:1581px;top:794px;width:88px;height:1px;background:#f0f2fb"></div>
<div class="hr" style="left:1690px;top:794px;width:88px;height:1px;background:#f0f2fb"></div>
<div class="hr" style="left:1800px;top:610.500px;width:88px;height:1px;background:#f0f2fb"></div>
<div class="hr" style="left:1800px;top:669px;width:88px;height:1px;background:#f0f2fb"></div>
<svg style="left:1256px;top:731.600px;overflow:visible;filter:drop-shadow(0 3px 4px rgba(70,90,180,.1))" width="88" height="49" viewBox="0 0 88 49"><path d="M44 .5 87.500 24.500 44 48.500 .5 24.500z" fill="#fff" stroke="#eef1fc"/></svg>

<span class="nt" style="left:1190.500px;top:735px">Review Job<br>Application</span>
<span class="nt" style="left:1300px;top:748.500px">Initial Interview<br>Success?</span>
<span class="nt" style="left:1408px;top:642px">Schedule<br>Department<br>Interview</span>
<span class="nt" style="left:1408px;top:712px">Collect References</span>
<span class="nt" style="left:1408px;top:770.500px">Conduct<br>Background Check</span>
<span class="nt" style="left:1408px;top:836.500px">Modify Job Offer</span>
<span class="nt" style="left:1516.500px;top:766px">Conduct<br>Department<br>Interview</span>
<span class="nt" style="left:1625px;top:770.500px">Set Up Workstation<br>&amp; Email</span>
<span class="nt" style="left:1734px;top:770.500px">Process Payroll<br>Information</span>
<span class="nt" style="left:1843.500px;top:590px">Send Rejection<br>Email</span>
<span class="nt" style="left:1843.500px;top:653px">Archive Application</span>
<span class="nt" style="left:1516.500px;top:895px">Evaluate Candidate<br>Fit</span>
<span class="nt" style="left:1516.500px;top:960px">Approve Hiring</span>

<svg style="left:1146.500px;top:735px" width="6" height="6" fill="#6b6c80"><use href="#person"/></svg><span class="t st" style="left:1154px;top:738px;font-size:6px">1</span>
<svg style="left:1294.500px;top:733px" width="6" height="6" fill="#6b6c80"><use href="#person"/></svg><span class="t st" style="left:1302px;top:736px;font-size:6px">1</span>
<svg style="left:1363.800px;top:641.500px" width="6" height="6" fill="#6b6c80"><use href="#person"/></svg><span class="t st" style="left:1371.500px;top:644.500px;font-size:6px">1</span>
<svg style="left:1363.800px;top:704.500px" width="6" height="6" fill="#6b6c80"><use href="#person"/></svg><span class="t st" style="left:1371.500px;top:707.500px;font-size:6px">1</span>
<svg style="left:1363.800px;top:765.500px" width="6" height="6" fill="#6b6c80"><use href="#person"/></svg><span class="t st" style="left:1371.500px;top:768.500px;font-size:6px">1</span>
<svg style="left:1364px;top:828px" width="6" height="6" fill="#6b6c80"><use href="#person"/></svg><span class="t st" style="left:1371.500px;top:831px;font-size:6px">1</span>
<svg style="left:1472.500px;top:765.500px" width="6" height="6" fill="#6b6c80"><use href="#person"/></svg><span class="t st" style="left:1480px;top:768.500px;font-size:6px">1</span>
<svg style="left:1581.500px;top:765.500px" width="6" height="6" fill="#6b6c80"><use href="#person"/></svg><span class="t st" style="left:1589px;top:768.500px;font-size:6px">1</span>
<svg style="left:1690.500px;top:765.500px" width="6" height="6" fill="#6b6c80"><use href="#person"/></svg><span class="t st" style="left:1698px;top:768.500px;font-size:6px">1</span>
<svg style="left:1800px;top:589px" width="6" height="6" fill="#6b6c80"><use href="#person"/></svg><span class="t st" style="left:1807.500px;top:592px;font-size:6px">1</span>
<svg style="left:1800px;top:648.500px" width="6" height="6" fill="#6b6c80"><use href="#person"/></svg><span class="t st" style="left:1807.500px;top:651.500px;font-size:6px">1</span>
<svg style="left:1473px;top:890px" width="6" height="6" fill="#6b6c80"><use href="#person"/></svg><span class="t st" style="left:1480px;top:893px;font-size:6px">1</span>
<svg style="left:1473px;top:953px" width="6" height="6" fill="#6b6c80"><use href="#person"/></svg><span class="t st" style="left:1480px;top:956px;font-size:6px">1</span>

<svg style="left:1368px;top:676.500px" width="6.500" height="6.500"><use href="#alert"/></svg>
<svg style="left:1477px;top:800.500px" width="6.500" height="6.500"><use href="#alert"/></svg>
<svg style="left:1586px;top:800.500px" width="6.500" height="6.500"><use href="#alert"/></svg>
<svg style="left:1804px;top:616px" width="6.500" height="6.500"><use href="#alert"/></svg>

<svg style="left:1415px;top:676.500px" width="6" height="6"><use href="#soft"/></svg><span class="t st" style="left:1424px;top:680px;font-size:6px">4</span>
<svg style="left:1435px;top:676.500px" width="6" height="6"><use href="#doc"/></svg><span class="t st" style="left:1443.500px;top:680px;font-size:6px">5</span>
<svg style="left:1416px;top:741px" width="6" height="6"><use href="#soft"/></svg><span class="t st" style="left:1425px;top:744.500px;font-size:6px">2</span>
<svg style="left:1436px;top:741px" width="6" height="6"><use href="#doc"/></svg><span class="t st" style="left:1444.500px;top:744.500px;font-size:6px">1</span>
<svg style="left:1415px;top:800.500px" width="6" height="6"><use href="#soft"/></svg><span class="t st" style="left:1424px;top:804px;font-size:6px">2</span>
<svg style="left:1435px;top:800.500px" width="6" height="6"><use href="#doc"/></svg><span class="t st" style="left:1443.500px;top:804px;font-size:6px">0</span>
<svg style="left:1435px;top:862.500px" width="6" height="6"><use href="#doc"/></svg><span class="t st" style="left:1443.500px;top:866px;font-size:6px">2</span>
<svg style="left:1543px;top:800.500px" width="6" height="6"><use href="#doc"/></svg><span class="t st" style="left:1552px;top:804px;font-size:6px">2</span>

<!-- connectors -->
<svg style="left:0;top:0" width="1920" height="1080" fill="none" stroke="#2c2ca6" stroke-width="1.200">
<path d="M1190 720v9.500" marker-end="url(#ah)"/>
<path d="M1238 755.700h15" marker-end="url(#ah)"/>
<path d="M1300 717V602.300H1796.500" marker-end="url(#ah)"/>
<path d="M1351.700 662v125M1351.700 662H1361" marker-end="url(#ah)"/>
<path d="M1351.700 724.700H1361" marker-end="url(#ah)"/>
<path d="M1351.700 787H1360" marker-end="url(#ah)"/>
<path d="M1300 794V851.200H1361" marker-end="url(#ah)"/>
<path d="M1408 690v9.500" marker-end="url(#ah)"/>
<path d="M1408 815.500v8.500" marker-end="url(#ah)"/>
<path d="M1455.500 787H1470.500" marker-end="url(#ah)"/>
<path d="M1564 787h14.500" marker-end="url(#ah)"/>
<path d="M1673 787h14.500" marker-end="url(#ah)"/>
<path d="M1469.500 911.700H1190V782.500" marker-end="url(#ah)"/>
<path d="M1734 814V911.700H1563" marker-end="url(#ah)"/>
<path d="M1517 939v9" marker-end="url(#ah)"/>
<path d="M1517 1001v9.500" marker-end="url(#ah)"/>
<path d="M1844 689V1024H1532" marker-end="url(#ah)"/>
<path d="M1844 629v14" marker-end="url(#ah)"/>
</svg>

<div class="sq" style="left:1295px;top:719px;width:10.500px;height:8px;border-radius:0"></div><span class="c" style="left:1300.200px;top:723px;font-size:4.800px;color:#4a4c66">Non</span>
<div class="sq" style="left:1347px;top:752px;width:10px;height:8px;border-radius:0"></div><span class="c" style="left:1352px;top:756px;font-size:4.800px;color:#4a4c66">Oui</span>
<div class="sq" style="left:1295px;top:784px;width:10.500px;height:8px;border-radius:0"></div><span class="c" style="left:1300.200px;top:788px;font-size:4.800px;color:#4a4c66">Oui</span>

<svg style="left:1176px;top:692px" width="28" height="28" viewBox="0 0 28 28"><circle cx="14" cy="14" r="13" fill="#0fd089" stroke="#1c3a4a" stroke-width=".8"/><path d="M9.500 7.500 21 14 9.500 20.500z" fill="#fff"/></svg>
<svg style="left:1503px;top:1010px" width="28" height="28" viewBox="0 0 28 28"><circle cx="14" cy="14" r="13" fill="#e9474d" stroke="#2a1f3a" stroke-width=".8"/><rect x="8.500" y="8" width="11" height="12" rx="1" fill="#fff"/></svg>
</body></html>
